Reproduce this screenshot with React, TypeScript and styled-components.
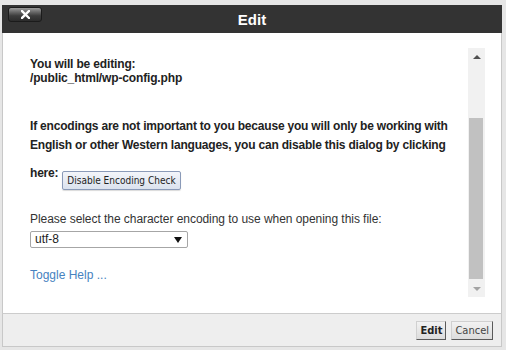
import styled, { createGlobalStyle } from 'styled-components'

const GlobalStyle = createGlobalStyle`
  html, body {
    margin: 0;
    padding: 0;
    background: #e6e6e6;
  }
  * {
    box-sizing: border-box;
  }
`

const Dialog = styled.div`
  width: 500px;
  margin: 5px 4px 0 2px;
  font-family: 'Liberation Sans', Arial, sans-serif;
  color: #222;
`

const TitleBar = styled.div`
  height: 28px;
  background: #333;
  display: grid;
  grid-template-columns: 1fr auto 1fr;
  align-items: center;
  padding: 0 6px;
`

const CloseButton = styled.button`
  justify-self: start;
  width: 34px;
  height: 15px;
  margin-top: -9px;
  padding: 0;
  border: 1px solid #1b1b1b;
  border-radius: 3px;
  background: linear-gradient(#9a9a9a 0%, #6a6a6a 30%, #3c3c3c 60%, #2c2c2c 100%);
  display: flex;
  align-items: center;
  justify-content: center;
  cursor: pointer;
`

const Title = styled.div`
  color: #fff;
  font-weight: 700;
  font-size: 15px;
`

const Body = styled.div`
  height: 280px;
  background: #fff;
  border-left: 1px solid #c8c8c8;
  border-right: 1px solid #c8c8c8;
  display: flex;
  padding: 15px 16px 0 27px;
`

const Content = styled.div`
  flex: 1;
  padding: 9px 4px 0 0;
  font-size: 12px;
`

const FileInfo = styled.div`
  font-weight: 700;
  line-height: 14px;
  letter-spacing: -0.15px;
`

const Notice = styled.p`
  margin: 32px 0 0;
  font-weight: 700;
  line-height: 19px;
  letter-spacing: -0.2px;
`

const DisableButton = styled.button`
  display: inline-block;
  height: 19px;
  margin: 16px 0 0 4px;
  padding: 0 4px;
  vertical-align: -7px;
  font-family: 'DejaVu Sans Condensed', 'DejaVu Sans', sans-serif;
  font-stretch: condensed;
  font-size: 10px;
  letter-spacing: 0;
  color: #222;
  background: linear-gradient(#f3f5fa, #dbe2ee);
  border: 1px solid #8a9ab8;
  border-radius: 2px;
  box-shadow: 0 1px 1px rgba(0, 0, 0, 0.15);
`

const Label = styled.div`
  margin-top: 21px;
  line-height: 16px;
  color: #333;
  letter-spacing: -0.05px;
`

const SelectBox = styled.div`
  width: 158px;
  height: 17px;
  margin-top: 4px;
  border: 1px solid #a6a6a6;
  border-radius: 2px;
  background: #fff;
  display: flex;
  align-items: center;
  justify-content: space-between;
  padding: 0 5px 0 4px;
  color: #222;
  line-height: 15px;
`

const Caret = styled.span`
  width: 0;
  height: 0;
  border-left: 4px solid transparent;
  border-right: 4px solid transparent;
  border-top: 6px solid #111;
`

const HelpLink = styled.a`
  display: block;
  margin-top: 19px;
  line-height: 16px;
  color: #4682c0;
  text-decoration: none;
`

const Scrollbar = styled.div`
  width: 17px;
  height: 249px;
  background: #f1f1f1;
  display: flex;
  flex-direction: column;
  align-items: center;
`

const Arrow = styled.div<{ $up?: boolean; $color: string }>`
  height: 17px;
  display: flex;
  align-items: center;
  justify-content: center;

  &::before {
    content: '';
    border-left: 4px solid transparent;
    border-right: 4px solid transparent;
    ${({ $up, $color }) =>
      $up ? `border-bottom: 4px solid ${$color};` : `border-top: 4px solid ${$color};`}
  }
`

const Track = styled.div`
  flex: 1;
  width: 100%;
  padding: 53px 2px 1px 1px;
  display: flex;
`

const Thumb = styled.div`
  width: 100%;
  height: 161px;
  background: #c1c1c1;
`

const Footer = styled.div`
  height: 34px;
  background: #eee;
  border: 1px solid #c8c8c8;
  border-top-color: #ccc;
  display: flex;
  justify-content: flex-end;
  align-items: flex-start;
  gap: 5px;
  padding: 7px 8px 0 0;
`

const FooterButton = styled.button<{ $primary?: boolean }>`
  height: 19px;
  padding: 0 3px;
  font-family: 'DejaVu Sans Condensed', 'DejaVu Sans', sans-serif;
  font-size: 11px;
  font-weight: ${({ $primary }) => ($primary ? 700 : 400)};
  color: ${({ $primary }) => ($primary ? '#222' : '#444')};
  background: linear-gradient(#f2f2f2, #dcdcdc);
  border: 1px solid;
  border-color: #d0d0d0 #5a5a5a #5a5a5a #d0d0d0;
  border-radius: 0;
`

export default function App() {
  return (
    <>
      <GlobalStyle />
      <Dialog>
        <TitleBar>
          <CloseButton aria-label="Close">
            <svg width="9" height="9" viewBox="0 0 9 9">
              <path d="M1 1 L8 8 M8 1 L1 8" stroke="#fff" strokeWidth="2.4" strokeLinecap="square" />
            </svg>
          </CloseButton>
          <Title>Edit</Title>
          <span />
        </TitleBar>
        <Body>
          <Content>
            <FileInfo>
              You will be editing:
              <br />
              /public_html/wp-config.php
            </FileInfo>
            <Notice>
              If encodings are not important to you because you will only be working with English or other
              Western languages, you can disable this dialog by clicking here:
              <DisableButton>Disable Encoding Check</DisableButton>
            </Notice>
            <Label>Please select the character encoding to use when opening this file:</Label>
            <SelectBox>
              <span>utf-8</span>
              <Caret />
            </SelectBox>
            <HelpLink href="#">Toggle Help ...</HelpLink>
          </Content>
          <Scrollbar>
            <Arrow $up $color="#505050" />
            <Track>
              <Thumb />
            </Track>
            <Arrow $color="#a3a3a3" />
          </Scrollbar>
        </Body>
        <Footer>
          <FooterButton $primary>Edit</FooterButton>
          <FooterButton>Cancel</FooterButton>
        </Footer>
      </Dialog>
    </>
  )
}
